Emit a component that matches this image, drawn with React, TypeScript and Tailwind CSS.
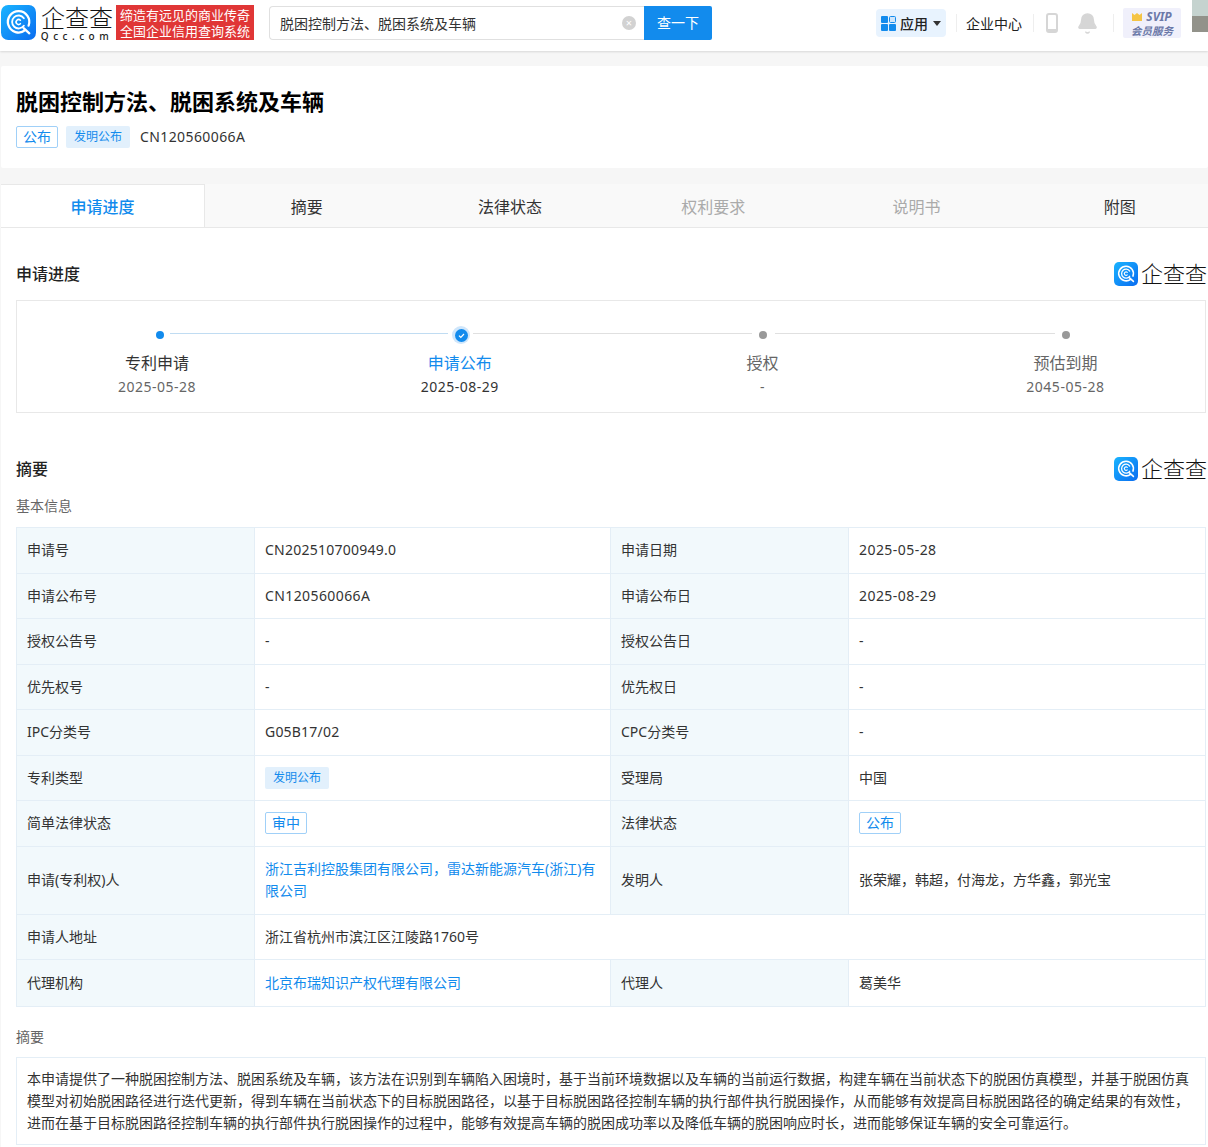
import { Bell } from 'lucide-react'

function LogoIcon({ size }: { size: number }) {
  return (
    <svg width={size} height={size} viewBox="0 0 34 34" className="shrink-0">
      <defs>
        <linearGradient id="qcc" x1="0" y1="0" x2="1" y2="1">
          <stop offset="0" stopColor="#19b4ff" />
          <stop offset="1" stopColor="#0a6cf0" />
        </linearGradient>
      </defs>
      <rect width="34" height="34" rx="7" fill="url(#qcc)" />
      <path d="M23.5 24.5A10.4 10.4 0 1 1 26.8 20" fill="none" stroke="#fff" strokeWidth="2.2" strokeLinecap="round" />
      <path d="M22 22.5l5.5 5" fill="none" stroke="#fff" strokeWidth="2.2" strokeLinecap="round" />
      <path d="M22.2 20.2A6.3 6.3 0 1 1 22.2 12.8" fill="none" stroke="#fff" strokeWidth="1.8" strokeLinecap="round" />
      <path d="M18.8 18.2A2.4 2.4 0 1 1 18.8 14.8" fill="none" stroke="#fff" strokeWidth="1.6" strokeLinecap="round" />
    </svg>
  )
}

function SectionHead({ title }: { title: string }) {
  return (
    <div className="flex items-center justify-between h-6">
      <h3 className="text-base font-medium text-[#222]">{title}</h3>
      <div className="flex items-center gap-[3px]">
        <LogoIcon size={24} />
        <span className="text-[22px] leading-6 w-[65px] -mt-[2px] font-light whitespace-nowrap text-[#111]">企查查</span>
      </div>
    </div>
  )
}

const steps = [
  { name: '专利申请', date: '2025-05-28', nameCls: 'text-[#333]', dateCls: 'text-[#666]' },
  { name: '申请公布', date: '2025-08-29', nameCls: 'text-[#128bed]', dateCls: 'text-[#333]' },
  { name: '授权', date: '-', nameCls: 'text-[#666]', dateCls: 'text-[#666]' },
  { name: '预估到期', date: '2045-05-28', nameCls: 'text-[#666]', dateCls: 'text-[#666]' },
]

function Label({ children }: { children: React.ReactNode }) {
  return <div className="flex items-center bg-[#f2f9fc] pl-[10px] border-r border-[#e4eef6] text-[#333]">{children}</div>
}

function Val({ children, last, span }: { children: React.ReactNode; last?: boolean; span?: boolean }) {
  return (
    <div className={`flex items-center px-[10px] text-[#333] ${last ? '' : 'border-r border-[#e4eef6]'} ${span ? 'col-span-3' : ''}`}>
      {children}
    </div>
  )
}

function Num({ children }: { children: React.ReactNode }) {
  return <span className="tracking-[0.45px]">{children}</span>
}

function Row({ children, tall, end }: { children: React.ReactNode; tall?: boolean; end?: boolean }) {
  return (
    <div className={`grid grid-cols-[238px_356px_238px_1fr] ${tall ? 'h-[68px]' : 'h-[45.5px]'} ${end ? '' : 'border-b border-[#e4eef6]'}`}>
      {children}
    </div>
  )
}

function OutlineTag({ text }: { text: string }) {
  return <span className="inline-flex items-center h-[22px] px-[6px] text-sm text-[#128bed] border border-[#a0d0f8] rounded-[2px]">{text}</span>
}

function SoftTag({ text }: { text: string }) {
  return <span className="inline-flex items-center h-[22px] px-2 text-xs text-[#128bed] bg-[#e2f0fc] rounded-[2px]">{text}</span>
}

export default function App() {
  return (
    <div className="w-[1208px] h-[1147px] overflow-hidden bg-[#f6f6f6] text-sm [font-family:'Noto_Sans','Noto_Sans_CJK_SC',sans-serif]">
      <header className="h-[51px] bg-white shadow-[0_1px_2px_rgba(0,0,0,0.12)] flex items-start relative">
        <div className="pt-[5px] pl-[1px] flex">
          <LogoIcon size={35} />
          <div className="ml-[5px] w-[72px] flex flex-col items-center">
            <span className="mt-px text-[24px] leading-[24px] font-light text-[#111] whitespace-nowrap">企查查</span>
            <span className="mt-[2px] text-[10px] leading-[9px] tracking-[4.5px] font-medium text-[#222] whitespace-nowrap">Qcc.com</span>
          </div>
          <div className="ml-[3px] w-[138px] h-[35px] bg-[#e03636] text-white text-[13px] leading-[16px] flex flex-col items-center justify-center whitespace-nowrap">
            <span>缔造有远见的商业传奇</span>
            <span>全国企业信用查询系统</span>
          </div>
        </div>
        <div className="ml-[15px] mt-[6px] flex h-[34px]">
          <div className="w-[375px] border border-[#e0e0e0] border-r-0 rounded-l-[4px] flex items-center pl-[10px] pr-[8px] justify-between text-sm text-[#333]">
            <span className="pt-px">脱困控制方法、脱困系统及车辆</span>
            <span className="w-[14px] h-[14px] rounded-full bg-[#d2d2d2] text-white text-[11px] leading-[14px] text-center">×</span>
          </div>
          <button className="w-[68px] bg-[#128bed] text-white rounded-r-[2px] text-sm">查一下</button>
        </div>
        <div className="ml-[164px] mt-[9px] flex items-center h-[28px]">
          <div className="w-[70px] h-[28px] bg-[#e8f3fe] rounded-[4px] flex items-center pl-[5px]">
            <svg width="15" height="15" viewBox="0 0 15 15" className="shrink-0">
              <rect x="0" y="0" width="7" height="7" rx="1" fill="#128bed" />
              <rect x="8.5" y="0.5" width="6" height="6" rx="1" fill="#cfe6fb" stroke="#128bed" />
              <rect x="0" y="8" width="7" height="7" rx="1" fill="#128bed" />
              <rect x="8" y="8" width="7" height="7" rx="1" fill="#128bed" />
            </svg>
            <span className="ml-1 pt-px font-medium text-[#222]">应用</span>
            <svg width="8" height="5" viewBox="0 0 8 5" className="ml-[5px]"><path d="M0 0h8L4 5z" fill="#333" /></svg>
          </div>
          <div className="ml-[10px] w-px h-[18px] bg-[#eee]" />
          <span className="ml-[9px] pt-px w-[57px] text-[#222]">企业中心</span>
          <div className="ml-[10px] w-px h-[18px] bg-[#eee]" />
          <div className="ml-[12px] w-[12px] h-[20px] border-2 border-[#d6d6d6] rounded-[3px] flex items-end justify-center">
            <div className="w-full h-[2px] bg-[#d6d6d6]" />
          </div>
          <Bell className="ml-[18px] w-[23px] h-[23px] text-[#d6d6d6] fill-[#d6d6d6]" strokeWidth={1.5} />
          <div className="ml-[14px] w-px h-[18px] bg-[#eee]" />
          <div className="ml-[9px] w-[58px] h-[30px] bg-[#f0f0fb] rounded-[2px] flex flex-col items-center justify-center text-[#6b78a8] italic font-bold leading-[13px]">
            <div className="flex items-center gap-1 text-xs">
              <svg width="10" height="8" viewBox="0 0 10 8"><path d="M0 0l2.5 2L5 0l2.5 2L10 0v8H0z" fill="#f5c445" /></svg>
              <span>SVIP</span>
            </div>
            <span className="text-[10.5px]">会员服务</span>
          </div>
        </div>
        <div className="absolute right-0 top-0 w-[16px] h-[32px] bg-[linear-gradient(#c5d3cf_0,#c5d3cf_50%,#92928a_50%,#92928a_100%)]" />
      </header>

      <div className="ml-px pt-[15px]">
        <section className="h-[102px] bg-white rounded-[2px] pl-[15px] pt-[20px]">
          <h1 className="text-[22px] leading-[30px] font-bold text-black">脱困控制方法、脱困系统及车辆</h1>
          <div className="mt-[10px] flex items-center">
            <OutlineTag text="公布" />
            <span className="ml-2"><SoftTag text="发明公布" /></span>
            <span className="ml-[10px] text-[#333] tracking-[0.4px]">CN120560066A</span>
          </div>
        </section>

        <nav className="mt-4 h-[44px] flex overflow-hidden text-base text-[#333] bg-[#f9f9f9] border-b border-[#e8e8e8]">
          <div className="w-[204px] shrink-0 h-[44px] bg-white border-t border-r border-[#e8e8e8] flex items-center justify-center text-[#128bed] font-medium">申请进度</div>
          <div className="w-[203.3px] shrink-0 pt-[2px] flex items-center justify-center">摘要</div>
          <div className="w-[203.3px] shrink-0 pt-[2px] flex items-center justify-center">法律状态</div>
          <div className="w-[203.3px] shrink-0 pt-[2px] flex items-center justify-center text-[#aaa]">权利要求</div>
          <div className="w-[203.3px] shrink-0 pt-[2px] flex items-center justify-center text-[#aaa]">说明书</div>
          <div className="w-[203.3px] shrink-0 pt-[2px] flex items-center justify-center">附图</div>
        </nav>

        <main className="bg-white pl-[15px] pr-[2px] pt-[34px] h-[1000px]">
          <SectionHead title="申请进度" />
          <div className="mt-[14px] h-[113px] border border-[#e8e8e8]">
            <div className="pt-[26px] pl-[139px] flex items-center h-[42px]">
              <div className="w-2 h-2 rounded-full bg-[#128bed] shrink-0" />
              <div className="ml-[6px] w-[278px] h-px bg-[#c0dcf2] mb-[3px]" />
              <div className="ml-[4px] w-[18px] h-[18px] rounded-full bg-[#cfe6fb] flex items-center justify-center shrink-0">
                <div className="w-[13px] h-[13px] rounded-full bg-[#128bed] flex items-center justify-center">
                  <svg width="9" height="9" viewBox="0 0 9 9"><path d="M2 4.6l1.8 1.8L7 3" fill="none" stroke="#fff" strokeWidth="1.2" /></svg>
                </div>
              </div>
              <div className="ml-[3px] w-[279px] h-px bg-[#e0e0e0] mb-[3px]" />
              <div className="ml-[7px] w-2 h-2 rounded-full bg-[#999] shrink-0" />
              <div className="ml-[8px] w-[280px] h-px bg-[#e0e0e0] mb-[3px]" />
              <div className="ml-[7px] w-2 h-2 rounded-full bg-[#999] shrink-0" />
            </div>
            <div className="-ml-[11.4px] -mr-[11.8px] grid grid-cols-4 text-center pt-[8px]">
              {steps.map((s) => (
                <div key={s.name}>
                  <div className={`text-base leading-6 ${s.nameCls}`}>{s.name}</div>
                  <div className={`mt-px leading-[22px] tracking-[0.5px] ${s.dateCls}`}>{s.date}</div>
                </div>
              ))}
            </div>
          </div>

          <div className="mt-[44px]">
            <SectionHead title="摘要" />
          </div>
          <h4 className="mt-[15px] leading-5 text-[#666]">基本信息</h4>
          <div className="mt-[11px] border border-[#e4eef6]">
            <Row>
              <Label>申请号</Label>
              <Val><span className="tracking-[0.25px]">CN202510700949.0</span></Val>
              <Label>申请日期</Label>
              <Val last><Num>2025-05-28</Num></Val>
            </Row>
            <Row>
              <Label>申请公布号</Label>
              <Val><span className="tracking-[0.4px]">CN120560066A</span></Val>
              <Label>申请公布日</Label>
              <Val last><Num>2025-08-29</Num></Val>
            </Row>
            <Row>
              <Label>授权公告号</Label>
              <Val>-</Val>
              <Label>授权公告日</Label>
              <Val last>-</Val>
            </Row>
            <Row>
              <Label>优先权号</Label>
              <Val>-</Val>
              <Label>优先权日</Label>
              <Val last>-</Val>
            </Row>
            <Row>
              <Label>IPC分类号</Label>
              <Val><span className="tracking-[0.2px]">G05B17/02</span></Val>
              <Label>CPC分类号</Label>
              <Val last>-</Val>
            </Row>
            <Row>
              <Label>专利类型</Label>
              <Val><SoftTag text="发明公布" /></Val>
              <Label>受理局</Label>
              <Val last>中国</Val>
            </Row>
            <Row>
              <Label>简单法律状态</Label>
              <Val><OutlineTag text="审中" /></Val>
              <Label>法律状态</Label>
              <Val last><OutlineTag text="公布" /></Val>
            </Row>
            <Row tall>
              <Label>申请(专利权)人</Label>
              <Val><span className="text-[#128bed] leading-[22px]">浙江吉利控股集团有限公司，雷达新能源汽车(浙江)有限公司</span></Val>
              <Label>发明人</Label>
              <Val last>张荣耀，韩超，付海龙，方华鑫，郭光宝</Val>
            </Row>
            <Row>
              <Label>申请人地址</Label>
              <Val last span>浙江省杭州市滨江区江陵路1760号</Val>
            </Row>
            <Row end>
              <Label>代理机构</Label>
              <Val><span className="text-[#128bed]">北京布瑞知识产权代理有限公司</span></Val>
              <Label>代理人</Label>
              <Val last>葛美华</Val>
            </Row>
          </div>

          <h4 className="mt-[20px] leading-5 text-[#666]">摘要</h4>
          <div className="mt-[10px] border border-[#e4eef6] px-[10px] py-[10px] leading-[22px] text-[#333]">
            本申请提供了一种脱困控制方法、脱困系统及车辆，该方法在识别到车辆陷入困境时，基于当前环境数据以及车辆的当前运行数据，构建车辆在当前状态下的脱困仿真模型，并基于脱困仿真模型对初始脱困路径进行迭代更新，得到车辆在当前状态下的目标脱困路径，以基于目标脱困路径控制车辆的执行部件执行脱困操作，从而能够有效提高目标脱困路径的确定结果的有效性，进而在基于目标脱困路径控制车辆的执行部件执行脱困操作的过程中，能够有效提高车辆的脱困成功率以及降低车辆的脱困响应时长，进而能够保证车辆的安全可靠运行。
          </div>
        </main>
      </div>
    </div>
  )
}
